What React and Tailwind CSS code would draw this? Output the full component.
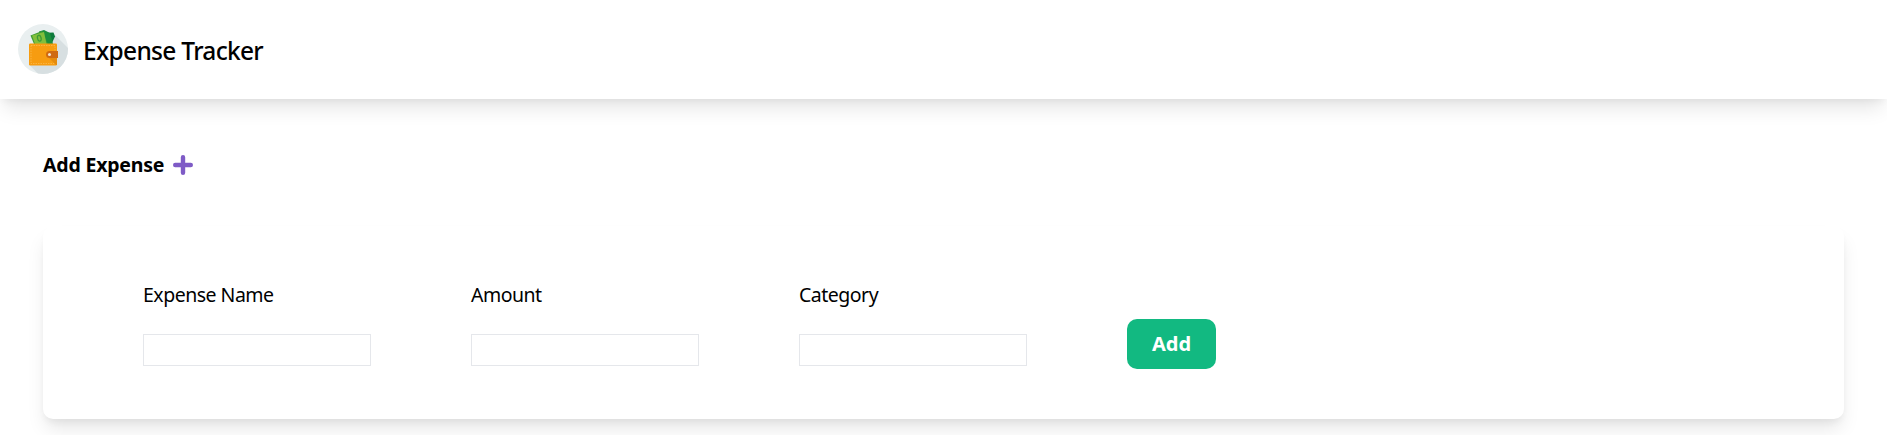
function WalletLogo() {
  return (
    <svg className="h-[50px] w-[50px] shrink-0" viewBox="0 0 50 50" aria-hidden="true">
      <defs>
        <clipPath id="disc">
          <circle cx="25" cy="25" r="25" />
        </clipPath>
      </defs>
      <g clipPath="url(#disc)">
        <rect width="50" height="50" fill="#e9eff0" />
        <path d="M36 10 L60 34 V60 H30 L11.500 41 Z" fill="#d7dfe1" />
        <path d="M23 9 L35.500 8.500 L37 12.500 L33 21 H22 Z" fill="#0d7a3c" />
        <path d="M21 7.500 L26 6 L32 9 L35 20 H22 Z" fill="#1c8f3c" />
        <path d="M12.500 11.500 L24 7 L30 20 H16 Z" fill="#3d9b35" />
        <path d="M14 11.500 L26 8 L28.500 20 H17 Z" fill="#82bf3c" />
        <ellipse cx="21.300" cy="14.200" rx="1.800" ry="3" fill="#82bf3c" stroke="#3d9b35" strokeWidth="1.300" transform="rotate(-14 21.300 14.200)" />
        <rect x="11" y="19.500" width="28" height="22" rx="1.200" fill="#f79c10" />
        <rect x="13" y="21.500" width="24" height="18" fill="none" stroke="#fbbd55" strokeWidth="0.700" strokeDasharray="1.500 1" />
        <path d="M31 34 H39 V41 H38 Z" fill="#e58b0c" />
        <path d="M31.500 27 H40 V34 H31.500 A3.500 3.500 0 0 1 31.500 27 Z" fill="#cf6a12" />
        <circle cx="31.500" cy="30.500" r="1.500" fill="#f1e3d2" />
      </g>
    </svg>
  );
}

function PlusIcon() {
  return (
    <svg className="h-5 w-5 shrink-0" viewBox="0 0 20 20" fill="none" stroke="#7e5bc6" strokeWidth="4.400" strokeLinecap="round" aria-hidden="true">
      <path d="M10 2.200V17.800M2.200 10H17.800" />
    </svg>
  );
}

function Field({ label }) {
  return (
    <label className="flex w-[228px] flex-col gap-6">
      <span className="text-[19.5px] leading-[30px] tracking-[-0.5px]">{label}</span>
      <input className="h-8 w-full border border-gray-200 bg-white px-1 outline-none" />
    </label>
  );
}

export default function App() {
  return (
    <div className="min-h-[435px] overflow-hidden bg-white font-['Noto_Sans',sans-serif] text-black">
      <header className="flex h-[99px] gap-[15px] pt-6 pl-[18px] shadow-[0_12.5px_18.75px_-3.75px_rgb(0_0_0/0.1),0_5px_7.5px_-2.5px_rgb(0_0_0/0.05)]">
        <WalletLogo />
        <h1 className="pt-[9px] text-[24.5px] leading-[35px] font-medium tracking-[-0.7px] whitespace-nowrap">Expense Tracker</h1>
      </header>
      <main className="px-[43px] pt-[51px]">
        <div className="flex items-center gap-[9px]">
          <h2 className="w-[121px] text-[19.5px] leading-[30px] font-bold tracking-[-0.2px] whitespace-nowrap">Add Expense</h2>
          <PlusIcon />
        </div>
        <form className="mt-[46px] flex h-[193px] gap-[100px] rounded-[10px] bg-white px-[100px] pt-[54px] shadow-[0_12.5px_18.75px_-3.75px_rgb(0_0_0/0.1),0_5px_7.5px_-2.5px_rgb(0_0_0/0.05)]">
          <Field label="Expense Name" />
          <Field label="Amount" />
          <Field label="Category" />
          <button type="button" className="mt-[39px] h-[50px] w-[89px] rounded-[10px] bg-[#12b981] text-[20px] font-bold text-white">
            Add
          </button>
        </form>
      </main>
    </div>
  );
}
